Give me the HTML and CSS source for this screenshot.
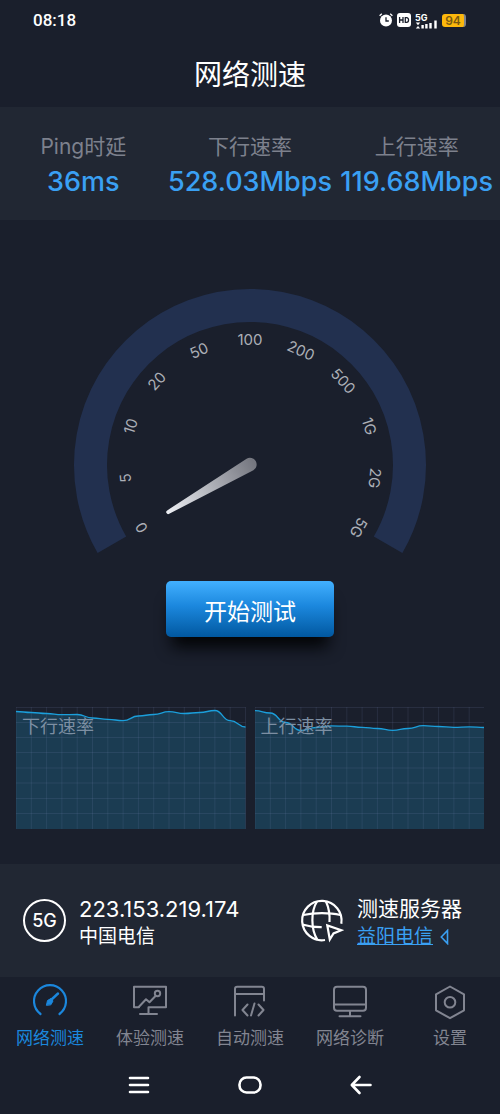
FILE: index.html
```html
<!DOCTYPE html>
<html lang="zh-CN">
<head>
<meta charset="utf-8">
<meta name="viewport" content="width=device-width, initial-scale=1">
<title>网络测速</title>
<link rel="stylesheet" href="styles.css">
</head>
<body>
<div class="status-bar">
  <time class="clock">08:18</time>
  <div class="status-icons">
    <svg width="14" height="14" viewBox="0 0 14 14" aria-hidden="true">
      <circle cx="7" cy="7.5" r="6" fill="#fff"/>
      <path d="M0.6 2.8 2.8 0.8M13.4 2.8 11.2 0.8" stroke="#fff" stroke-width="1.3"/>
      <path d="M7 4.3V8H9.8" fill="none" stroke="#1a1f2c" stroke-width="1.3"/>
    </svg>
    <svg width="14" height="14" viewBox="0 0 14 14" aria-hidden="true">
      <rect width="14" height="14" rx="3" fill="#fff"/>
      <path d="M2.6 4v6M6 4v6M2.6 7H6M8.3 4.6V9.4H9.6C12.2 9.4 12.2 4.6 9.6 4.6Z" fill="none" stroke="#1a1f2c" stroke-width="1.3"/>
    </svg>
    <svg class="signal" width="23" height="18" viewBox="0 -3 23 18" aria-hidden="true">
      <text x="0" y="7">5G</text>
      <path d="M0.8 8.500h4.4L3 11.300ZM0.8 14.5h4.4L3 12Z" fill="#fff"/>
      <path d="M7.6 11v3.5M11.4 10v4.5M15.5 9v5.5M20.5 6.5v8" stroke="#fff" stroke-width="2.4"/>
    </svg>
    <span class="battery">94</span>
  </div>
</div>

<header class="title-bar"><h1>网络测速</h1></header>

<dl class="metrics">
  <div class="metric"><dt>Ping时延</dt><dd>36ms</dd></div>
  <div class="metric"><dt>下行速率</dt><dd>528.03Mbps</dd></div>
  <div class="metric"><dt>上行速率</dt><dd>119.68Mbps</dd></div>
</dl>

<main class="test">
  <svg class="gauge" viewBox="0 0 500 360" role="img" aria-label="测速仪表盘">
    <defs>
      <linearGradient id="needle" gradientUnits="userSpaceOnUse" x1="168" y1="292" x2="254" y2="242">
        <stop offset="0" stop-color="#eceef3"/>
        <stop offset="1" stop-color="#757780"/>
      </linearGradient>
    </defs>
    <path d="M111.9 323.75A159.5 159.5 0 1 1 388.1 323.75" fill="none" stroke="#22304f" stroke-width="33"/>
    <g class="ticks" transform="translate(250 244)">
      <text y="-120" transform="rotate(-120)">0</text>
      <text y="-120" transform="rotate(-96)">5</text>
      <text y="-120" transform="rotate(-72)">10</text>
      <text y="-120" transform="rotate(-48)">20</text>
      <text y="-120" transform="rotate(-24)">50</text>
      <text y="-120">100</text>
      <text y="-120" transform="rotate(24)">200</text>
      <text y="-120" transform="rotate(48)">500</text>
      <text y="-120" transform="rotate(72)">1G</text>
      <text y="-120" transform="rotate(96)">2G</text>
      <text y="-120" transform="rotate(120)">5G</text>
    </g>
    <path d="M167.2 289.400 246.600 237.800A6.600 6.600 0 0 1 253.400 249.200L169.200 292.800A1.900 1.900 0 0 1 167.200 289.400Z" fill="url(#needle)"/>
  </svg>

  <button class="start" type="button">开始测试</button>

  <div class="charts">
    <figure class="chart">
      <figcaption>下行速率</figcaption>
      <svg viewBox="0 0 150 122" preserveAspectRatio="none" aria-hidden="true">
        <path class="area" d="M0 4.5C5 4.5 5 5.5 10 5.5S15 6.5 20 6.5 25 7.7 30 7.7 35 7.5 40 7.5 45 11 50 11 55 12.3 60 12.3 65 13.7 70 13.7 75 9 80 9 85 7.5 90 7.5 95 4.7 100 4.7 105 6.5 110 6.5 115 5.5 120 5.5 125 3.5 130 3.5 135 13.7 140 13.7 145 20 150 20V122H0Z"/>
        <path class="grid" d="M0 0V122M10 0V122M20 0V122M30 0V122M40 0V122M50 0V122M60 0V122M70 0V122M80 0V122M90 0V122M100 0V122M110 0V122M120 0V122M130 0V122M140 0V122M150 0V122M0 .5H150M0 15.5H150M0 30.5H150M0 45.5H150M0 61H150M0 76H150M0 91.5H150M0 106.5H150"/>
        <path class="line" d="M0 4.5C5 4.5 5 5.5 10 5.5S15 6.5 20 6.5 25 7.7 30 7.7 35 7.5 40 7.5 45 11 50 11 55 12.3 60 12.3 65 13.7 70 13.7 75 9 80 9 85 7.5 90 7.5 95 4.7 100 4.7 105 6.5 110 6.5 115 5.5 120 5.5 125 3.5 130 3.5 135 13.7 140 13.7 145 20 150 20"/>
      </svg>
    </figure>
    <figure class="chart">
      <figcaption>上行速率</figcaption>
      <svg viewBox="0 0 150 122" preserveAspectRatio="none" aria-hidden="true">
        <path class="area" d="M0 3.7C5 3.7 5 6 10 6S15 15.5 20 15.5 25 23.5 30 23.5 35 20.5 40 20.5 45 18.9 50 18.9 55 19.2 60 19.2 65 20.3 70 20.3 75 21.5 80 21.5 85 23.3 90 23.3 95 21.5 100 21.5 105 18.6 110 18.6 115 19.5 120 19.5 125 20.4 130 20.4 135 19.8 140 19.8 145 20.5 150 20.5V122H0Z"/>
        <path class="grid" d="M0 0V122M10 0V122M20 0V122M30 0V122M40 0V122M50 0V122M60 0V122M70 0V122M80 0V122M90 0V122M100 0V122M110 0V122M120 0V122M130 0V122M140 0V122M150 0V122M0 .5H150M0 15.5H150M0 30.5H150M0 45.5H150M0 61H150M0 76H150M0 91.5H150M0 106.5H150"/>
        <path class="line" d="M0 3.7C5 3.7 5 6 10 6S15 15.5 20 15.5 25 23.5 30 23.5 35 20.5 40 20.5 45 18.9 50 18.9 55 19.2 60 19.2 65 20.3 70 20.3 75 21.5 80 21.5 85 23.3 90 23.3 95 21.5 100 21.5 105 18.6 110 18.6 115 19.5 120 19.5 125 20.4 130 20.4 135 19.8 140 19.8 145 20.5 150 20.5"/>
      </svg>
    </figure>
  </div>
</main>

<section class="connection">
  <div class="endpoint client">
    <span class="network-badge">5G</span>
    <div class="endpoint-text">
      <p class="primary ip">223.153.219.174</p>
      <p class="secondary">中国电信</p>
    </div>
  </div>
  <div class="endpoint server">
    <svg width="44" height="44" viewBox="0 0 44 44" fill="none" stroke="#fff" stroke-width="2.200" aria-hidden="true">
      <path d="M41.3 24.700A19.700 19.700 0 1 0 25 41"/>
      <path d="M17 2.500C11 12 10.500 30 17.500 41M26 2.500C28.500 8 30 15 29.500 23"/>
      <path d="M3.300 16C14 13.500 30 13.500 40.300 16M2.300 25.500C9 27.500 15 28.300 21.700 28.200"/>
      <path d="M27.300 26.500 29.800 40.500 33.500 34.500 41.300 31.200Z"/>
    </svg>
    <div class="endpoint-text">
      <p class="primary">测速服务器</p>
      <p class="secondary server-name"><a href="#server">益阳电信</a>
        <svg width="9" height="16" viewBox="0 0 9 16" aria-hidden="true"><path d="M7.500 1.500V14.500L1.300 8Z" fill="none" stroke="#3aa0f3" stroke-width="1.600"/></svg>
      </p>
    </div>
  </div>
</section>

<nav class="tabs">
  <a class="tab active" href="#speed" aria-current="page">
    <svg width="36" height="36" viewBox="0 0 36 36" aria-hidden="true">
      <path d="M8.500 30A16 16 0 1 1 27.500 30" stroke-width="2.200"/>
      <path d="M19 16 26 9.500" stroke-width="2.400"/>
      <path d="M14.500 21 15.500 16.500 19 14.500 21 17 19 20.500Z" fill="currentColor" stroke-width="1"/>
    </svg>
    <span>网络测速</span>
  </a>
  <a class="tab" href="#experience">
    <svg width="36" height="36" viewBox="0 0 36 36" aria-hidden="true">
      <path d="M7 23.200H2V2.800H34V23.200H16.500V30M8 30H25M6.500 23.200 14 15.200 17.500 18.300 23.500 12"/>
      <circle cx="25.500" cy="9.500" r="2.700"/>
    </svg>
    <span>体验测速</span>
  </a>
  <a class="tab" href="#auto">
    <svg width="36" height="36" viewBox="0 0 36 36" aria-hidden="true">
      <path d="M3 31.500V5Q3 2.800 5.200 2.800H29.800Q32 2.800 32 5V16.500M3 10H32M15.500 20.500 10.500 26 15.500 31.500M22.500 19.500 19 31.500M26.500 20.500 31.500 26 26.500 31.500"/>
    </svg>
    <span>自动测速</span>
  </a>
  <a class="tab" href="#diagnosis">
    <svg width="36" height="36" viewBox="0 0 36 36" aria-hidden="true">
      <rect x="2" y="2.800" width="32" height="24" rx="3"/>
      <path d="M2 20.500H34M18 27V32.200M7.500 32.200H28.500"/>
    </svg>
    <span>网络诊断</span>
  </a>
  <a class="tab" href="#settings">
    <svg width="36" height="36" viewBox="0 0 36 36" aria-hidden="true">
      <path d="M18 2.500 32 10.300V26.300L18 34.200 4 26.300V10.300Z"/>
      <circle cx="18" cy="18.300" r="5.300"/>
    </svg>
    <span>设置</span>
  </a>
</nav>

<div class="system-nav">
  <button type="button" aria-label="最近任务">
    <svg width="24" height="24" viewBox="0 0 24 24" aria-hidden="true"><path d="M3 5H21M3 12H21M3 19H21"/></svg>
  </button>
  <button type="button" aria-label="主屏幕">
    <svg width="24" height="24" viewBox="0 0 24 24" aria-hidden="true"><rect x="1.500" y="4.500" width="21" height="15" rx="7"/></svg>
  </button>
  <button type="button" aria-label="返回">
    <svg width="24" height="24" viewBox="0 0 24 24" aria-hidden="true"><path d="M21.500 12H3M10.500 4 2.800 12 10.500 20"/></svg>
  </button>
</div>
</body>
</html>
```
FILE: styles.css
```css
* {
  box-sizing: border-box;
}

body {
  margin: 0;
  background: #1a1f2c;
  color: #fff;
  font-family: Inter, "Noto Sans CJK SC", sans-serif;
}

h1, p, dl, dd, figure {
  margin: 0;
}

button {
  border: 0;
  font: inherit;
  color: inherit;
  cursor: pointer;
}

svg {
  display: block;
  flex: none;
}

.status-bar {
  display: flex;
  align-items: center;
  justify-content: space-between;
  height: 40px;
  padding: 0 34px 0 33px;
}

.clock {
  font-family: Roboto, sans-serif;
  font-size: 17px;
  font-weight: 500;
}

.status-icons {
  display: flex;
  align-items: center;
  gap: 4px;
}

.signal text {
  font: 700 9px Inter, sans-serif;
  fill: #fff;
}

.battery {
  width: 24px;
  height: 13px;
  border-radius: 3px;
  border-right: 2px solid #80838b;
  background: #fdb80c;
  color: #7a5a10;
  font-size: 12px;
  font-weight: 600;
  line-height: 13px;
  text-align: center;
}

.title-bar {
  display: flex;
  align-items: center;
  justify-content: center;
  height: 67px;
  padding-bottom: 2px;
}

.title-bar h1 {
  font-size: 28px;
  font-weight: 400;
}

.metrics {
  display: grid;
  grid-template-columns: repeat(3, minmax(0, 1fr));
  padding: 22px 0 20px;
  background: #212733;
  text-align: center;
  white-space: nowrap;
}

.metric dt {
  color: #7d818d;
  font-size: 21px;
  line-height: 35px;
}

.metric dd {
  color: #3aa0f3;
  font-size: 27px;
  font-weight: 500;
  line-height: 36px;
}

.test {
  padding: 1px 0 35px;
}

.gauge {
  width: 100%;
  max-width: 500px;
  margin: 0 auto;
}

.ticks text {
  fill: #acafb7;
  font-size: 15px;
  text-anchor: middle;
}

.start {
  display: block;
  margin: 0 auto;
  padding: 13px 38px 7px;
  border-radius: 5px;
  background: linear-gradient(#42b0ff, #1b87dd 45%, #0158a0);
  box-shadow: 0 16px 16px -6px #030406;
  font-size: 23px;
  line-height: 36px;
}

.charts {
  display: grid;
  grid-template-columns: 1fr 1fr;
  gap: 9px;
  margin-top: 70px;
  padding: 0 16px;
}

.chart {
  position: relative;
}

.chart svg {
  width: 100%;
  height: 122px;
}

.chart figcaption {
  position: absolute;
  top: 6px;
  left: 6px;
  color: #7d8fa3;
  font-size: 18px;
  line-height: 27px;
}

.chart path {
  vector-effect: non-scaling-stroke;
}

.area {
  fill: #1b3c52;
}

.grid {
  fill: none;
  stroke: #8290c0;
  stroke-opacity: 0.14;
}

.line {
  fill: none;
  stroke: #1b9fdb;
  stroke-width: 1.3px;
}

.connection {
  display: flex;
  justify-content: space-between;
  padding: 27px 38px;
  padding-left: 23px;
  background: #212733;
}

.endpoint {
  display: flex;
  align-items: center;
  gap: 13px;
}

.endpoint-text {
  padding-top: 4px;
}

.network-badge {
  width: 43px;
  height: 43px;
  border: 2px solid #fff;
  border-radius: 50%;
  font-size: 18px;
  font-weight: 500;
  line-height: 39px;
  text-align: center;
}

.primary {
  font-size: 21px;
  line-height: 28px;
}

.ip {
  font-size: 22px;
}

.secondary {
  font-size: 19px;
  line-height: 27px;
}

.server-name {
  display: flex;
  align-items: center;
  gap: 7px;
}

.server-name a {
  color: #3aa0f3;
}

.tabs {
  display: grid;
  grid-template-columns: repeat(5, 1fr);
  padding: 7px 0;
}

.tab {
  display: flex;
  flex-direction: column;
  align-items: center;
  gap: 4px;
  color: #828591;
  font-size: 17px;
  line-height: 28px;
  text-decoration: none;
}

.tab svg {
  fill: none;
  stroke: currentColor;
  stroke-width: 2;
  stroke-linecap: round;
  stroke-linejoin: round;
}

.tab.active {
  color: #1b87dd;
}

.system-nav {
  display: flex;
  justify-content: center;
  gap: 87px;
  padding: 14px 0;
}

.system-nav button {
  padding: 0;
  background: none;
}

.system-nav svg {
  fill: none;
  stroke: #fff;
  stroke-width: 2.6;
  stroke-linecap: round;
  stroke-linejoin: round;
}
```
